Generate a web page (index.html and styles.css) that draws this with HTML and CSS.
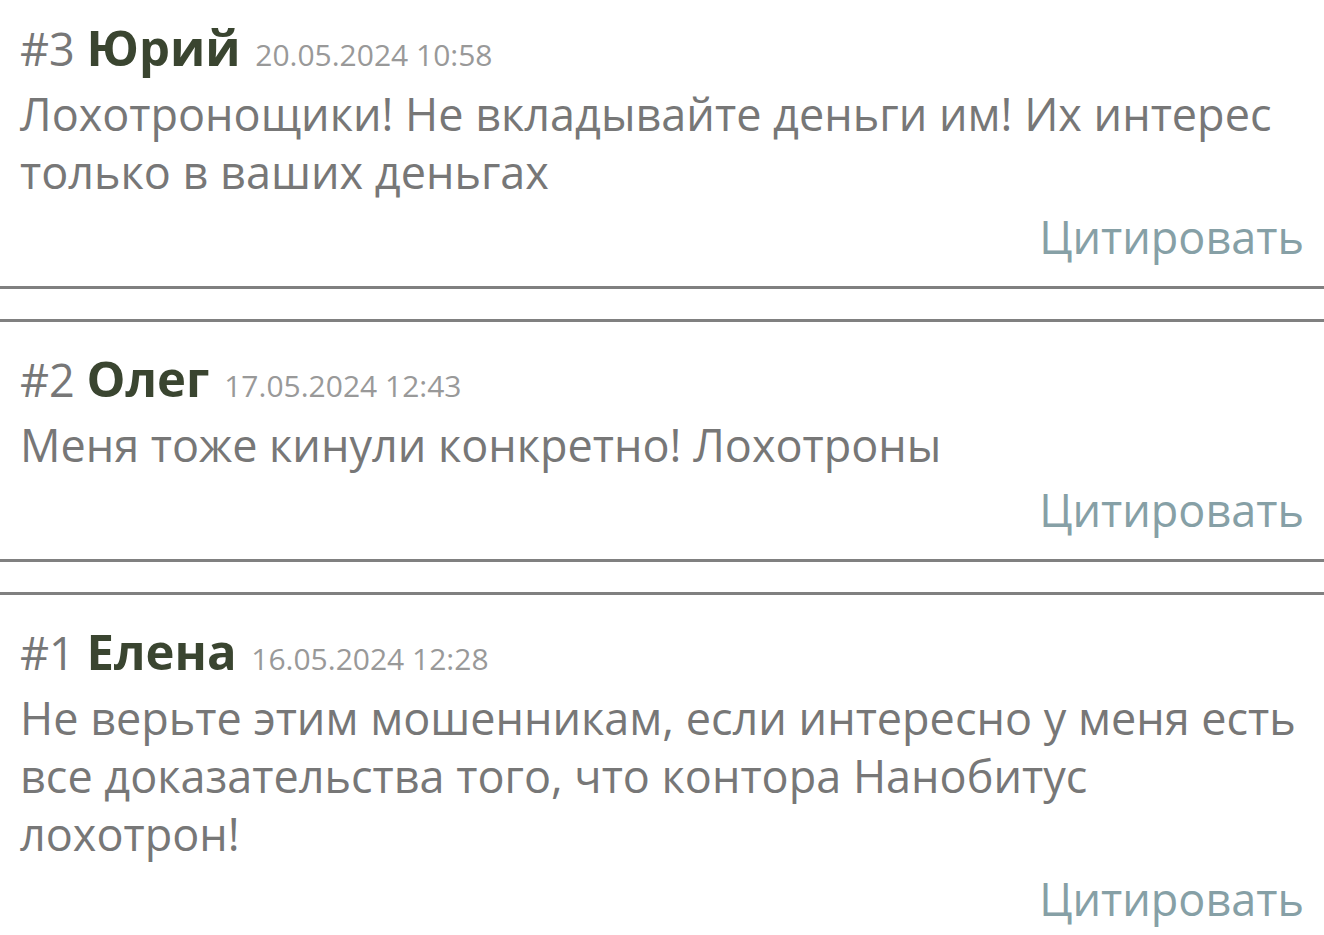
FILE: index.html
```html
<!DOCTYPE html>
<html lang="ru">
<head>
<meta charset="utf-8">
<title>Комментарии</title>
<link rel="stylesheet" href="styles.css">
</head>
<body>
<div class="comments">
  <div class="comment">
    <div class="comment-head"><span class="num">#3</span> <span class="author">Юрий</span> <span class="date">20.05.2024 10:58</span></div>
    <div class="comment-text">Лохотронощики! Не вкладывайте деньги им! Их интерес только в ваших деньгах</div>
    <div class="comment-actions"><a class="quote">Цитировать</a></div>
  </div>
  <div class="comment">
    <div class="comment-head"><span class="num">#2</span> <span class="author">Олег</span> <span class="date">17.05.2024 12:43</span></div>
    <div class="comment-text">Меня тоже кинули конкретно! Лохотроны</div>
    <div class="comment-actions"><a class="quote">Цитировать</a></div>
  </div>
  <div class="comment">
    <div class="comment-head"><span class="num">#1</span> <span class="author">Елена</span> <span class="date">16.05.2024 12:28</span></div>
    <div class="comment-text">Не верьте этим мошенникам, если интересно у меня есть все доказательства того, что контора Нанобитус лохотрон!</div>
    <div class="comment-actions"><a class="quote">Цитировать</a></div>
  </div>
</div>
</body>
</html>
```
FILE: styles.css
```css
html, body {
  margin: 0;
  padding: 0;
  background: #ffffff;
}
body {
  font-family: "Open Sans", "Noto Sans", sans-serif;
  font-size: 45px;
  line-height: 58px;
  color: #777777;
  overflow: hidden;
}
.comments {
  margin-top: -12px;
  display: flex;
  flex-direction: column;
  gap: 30px;
}
.comment {
  border-top: 3px solid #808080;
  border-bottom: 3px solid #808080;
  padding: 29px 20px 20px 20px;
  display: flex;
  flex-direction: column;
  gap: 7px;
}
.comment-head {
  line-height: 58px;
  white-space: nowrap;
}
.comment-head span {
  line-height: 1;
}
.num {
  color: #777777;
}
.author {
  color: #3a4530;
  font-weight: 700;
  font-size: 49px;
}
.date {
  color: #999999;
  font-size: 30px;
  margin-left: 3px;
}
.comment-text {
  color: #777777;
}
.comment-actions {
  display: flex;
  justify-content: flex-end;
}
.quote {
  color: #86a0a6;
  cursor: pointer;
}
```
